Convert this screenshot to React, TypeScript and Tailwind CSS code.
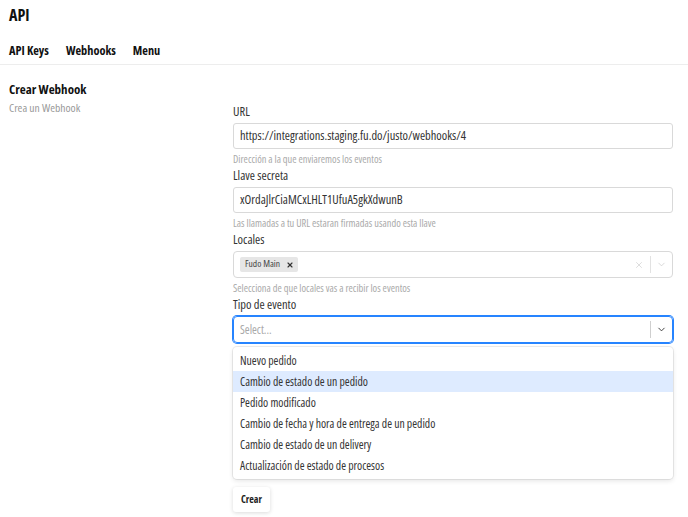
import { ChevronDown, X } from 'lucide-react'

const EVENT_TYPES = [
  'Nuevo pedido',
  'Cambio de estado de un pedido',
  'Pedido modificado',
  'Cambio de fecha y hora de entrega de un pedido',
  'Cambio de estado de un delivery',
  'Actualización de estado de procesos',
]

const HOVERED = 1

function Label({ children }: { children: React.ReactNode }) {
  return <div className="text-[12.5px] leading-[16px] text-[#333] mb-[3px]">{children}</div>
}

function Help({ children }: { children: React.ReactNode }) {
  return <div className="text-[10.4px] leading-[12px] text-[#aaa] mt-[4px] mb-[3px]">{children}</div>
}

function TextInput({ value }: { value: string }) {
  return (
    <div className="h-[26px] border border-[#d9d9d9] rounded-[3px] px-[6px] flex items-center text-[12.4px] text-[#333]">
      {value}
    </div>
  )
}

export default function App() {
  return (
    <div className="w-[688px] h-[517px] bg-white overflow-hidden text-[#222] font-['Open_Sans',sans-serif] font-stretch-condensed">
      {/* Header */}
      <div className="px-[9px] pt-[5px] h-[38px]">
        <h1 className="text-[16px] font-bold leading-[20px] text-[#111]">API</h1>
      </div>
      <nav className="flex gap-[17px] px-[9px] h-[27px] border-b border-[#ededed] text-[12.3px] font-bold text-[#111] leading-[26px]">
        <span>API Keys</span>
        <span>Webhooks</span>
        <span>Menu</span>
      </nav>

      {/* Body */}
      <div className="flex pl-[9px] pr-[15px] pt-[15px]">
        <div className="w-[224px]">
          <div className="text-[13px] font-bold leading-[18px] text-[#111]">Crear Webhook</div>
          <div className="text-[11.6px] leading-[14px] text-[#999] mt-[3px]">Crea un Webhook</div>
        </div>

        <div className="flex-1 pt-[24px]">
          <Label>URL</Label>
          <TextInput value="https://integrations.staging.fu.do/justo/webhooks/4" />
          <Help>Dirección a la que enviaremos los eventos</Help>

          <Label>Llave secreta</Label>
          <TextInput value="xOrdaJlrCiaMCxLHLT1UfuA5gkXdwunB" />
          <Help>Las llamadas a tu URL estaran firmadas usando esta llave</Help>

          <Label>Locales</Label>
          <div className="h-[27px] border border-[#d9d9d9] rounded-[4px] flex items-center">
            <div className="flex-1 px-[6px] flex items-center">
              <span className="flex items-center bg-[#e6e6e6] rounded-[2px] h-[15px] pl-[5px] pr-[4px] gap-[6px] text-[9.5px] text-[#444]">
                Fudo Main
                <X size={8} strokeWidth={3.5} className="text-[#333]" />
              </span>
            </div>
            <X size={10} strokeWidth={1.5} className="text-[#c8c8c8] mr-[6px]" />
            <div className="w-px h-[17px] bg-[#e2e2e2]" />
            <ChevronDown size={11} strokeWidth={1.5} className="text-[#c8c8c8] mx-[5px]" />
          </div>
          <Help>Selecciona de que locales vas a recibir los eventos</Help>

          <Label>Tipo de evento</Label>
          <div className="h-[27px] border border-[#2684ff] shadow-[0_0_0_1px_#2684ff] rounded-[4px] flex items-center">
            <div className="flex-1 px-[6px] text-[11.7px] text-[#a8a8a8]">Select...</div>
            <div className="w-px h-[17px] bg-[#cfcfcf]" />
            <ChevronDown size={11} strokeWidth={2} className="text-[#333] mx-[5px]" />
          </div>
          <div className="mt-[4px] bg-white rounded-[4px] shadow-[0_0_0_1px_rgba(0,0,0,0.07),0_2px_5px_rgba(0,0,0,0.1)] py-[3px]">
            {EVENT_TYPES.map((o, i) => (
              <div
                key={o}
                className={[
                  'h-[21px] px-[7px] flex items-center text-[11.7px] text-[#333]',
                  i === HOVERED ? 'bg-[#deebff]' : '',
                ].join(' ')}
              >
                {o}
              </div>
            ))}
          </div>

          <button className="mt-[8px] h-[25px] px-[8px] rounded-[3px] bg-white shadow-[0_1px_4px_rgba(0,0,0,0.15)] text-[10px] font-bold text-[#222]">
            Crear
          </button>
        </div>
      </div>
    </div>
  )
}
